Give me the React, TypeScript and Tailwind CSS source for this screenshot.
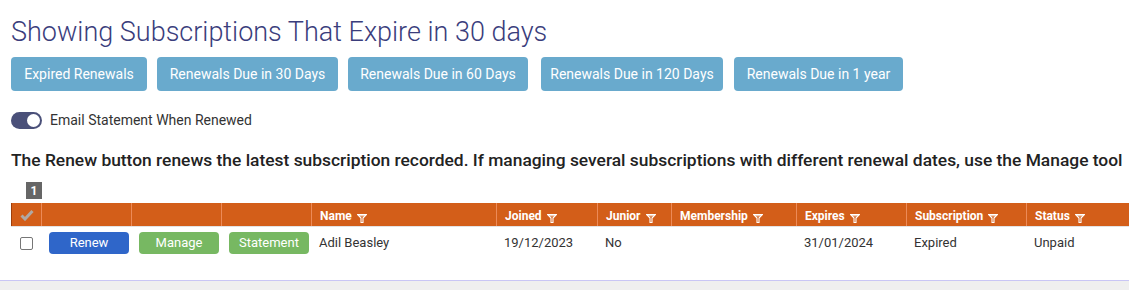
import React from 'react'

const ranges = [
  { label: 'Expired Renewals', w: 'w-[136px]' },
  { label: 'Renewals Due in 30 Days', w: 'w-[181px]' },
  { label: 'Renewals Due in 60 Days', w: 'w-[180px]' },
  { label: 'Renewals Due in 120 Days', w: 'w-[182px]' },
  { label: 'Renewals Due in 1 year', w: 'w-[169px]' },
]

const columns = [
  { label: 'Name', w: 'w-[185px]' },
  { label: 'Joined', w: 'w-[101px]' },
  { label: 'Junior', w: 'w-[74px]' },
  { label: 'Membership', w: 'w-[125px]' },
  { label: 'Expires', w: 'w-[110px]' },
  { label: 'Subscription', w: 'w-[120px]' },
  { label: 'Status', w: 'flex-1' },
]

const row = ['Adil Beasley', '19/12/2023', 'No', '', '31/01/2024', 'Expired', 'Unpaid']

const Funnel = () => (
  <svg width="10" height="9" viewBox="0 0 10 9" className="ml-[5px] mt-[7px] shrink-0">
    <path d="M0.5 0.5 H9.5 L6 4 V8.5 H4 V4 Z" fill="none" stroke="white" strokeWidth="1.1" />
    <path d="M2 1.8 H8" stroke="white" strokeWidth="1" />
  </svg>
)

export default function App() {
  return (
    <div className="w-[1129px] h-[290px] overflow-hidden bg-white font-['Roboto',sans-serif] flex flex-col">
      <div className="px-[11px] pt-[14px]">
        <h1 className="text-[27px] leading-[36px] font-light text-[#3a3d7c]">
          Showing Subscriptions That Expire in 30 days
        </h1>

        <div className="flex mt-[7px]">
          {ranges.map((r, i) => (
            <button
              key={r.label}
              className={`${r.w} h-[34px] rounded-[4px] bg-[#69aacd] text-white text-[14px] ${i === 0 ? '' : i === 3 ? 'ml-[13px]' : i === 4 ? 'ml-[11px]' : 'ml-[10px]'}`}
            >
              {r.label}
            </button>
          ))}
        </div>

        {/* email toggle */}
        <div className="flex items-center mt-[20px] h-[18px]">
          <div className="w-[31px] h-[17px] rounded-full bg-[#4a5079] flex items-center justify-end pr-[2px]">
            <div className="w-[13px] h-[13px] rounded-full bg-white" />
          </div>
          <span className="ml-[8px] text-[14px] text-[#333]">Email Statement When Renewed</span>
        </div>

        <p className="mt-[20px] text-[17.4px] leading-[22px] font-medium text-[#222] whitespace-nowrap">
          The Renew button renews the latest subscription recorded. If managing several subscriptions with different renewal dates, use the Manage tool
        </p>

        <div className="mt-[11px] ml-[15px] w-[16px] h-[17px] bg-[#666] text-white text-[12px] font-bold flex items-center justify-center">
          1
        </div>
      </div>

      <div className="ml-[11px] mt-[4px]">
        <div className="flex h-[23px] bg-[#d35e19] border-l border-[#9e3f0c] text-white text-[12px] font-bold">
          <div className="w-[30px] border-r border-[#ec8a58] flex items-center justify-center">
            <svg width="14" height="12" viewBox="0 0 14 12">
              <path d="M1.5 6.5 L5 10 L12.5 2" fill="none" stroke="#b0a8a4" strokeWidth="3" />
            </svg>
          </div>
          <div className="w-[90px] border-r border-[#ec8a58]" />
          <div className="w-[90px] border-r border-[#ec8a58]" />
          <div className="w-[90px] border-r border-[#ec8a58]" />
          {columns.map((c, i) => (
            <div
              key={c.label}
              className={`${c.w} flex items-start pl-[8px] pt-[4px] ${i < columns.length - 1 ? 'border-r border-[#ec8a58]' : ''}`}
            >
              <span>{c.label}</span>
              <Funnel />
            </div>
          ))}
        </div>

        <div className="flex h-[33px] items-center text-[13px] text-[#333] border-t border-[#e3e3e3]">
          <div className="w-[30px] flex justify-center">
            <input type="checkbox" className="w-[13px] h-[13px] appearance-none border border-[#767676] rounded-[2px] bg-white" />
          </div>
          <div className="w-[90px] pl-[8px]">
            <button className="w-[80px] h-[22px] rounded-[4px] bg-[#2f66c9] text-white text-[13px]">Renew</button>
          </div>
          <div className="w-[90px] pl-[8px]">
            <button className="w-[80px] h-[22px] rounded-[4px] bg-[#77b862] text-white text-[13px]">Manage</button>
          </div>
          <div className="w-[90px] pl-[8px]">
            <button className="w-[80px] h-[22px] rounded-[4px] bg-[#77b862] text-white text-[13px]">Statement</button>
          </div>
          {columns.map((c, i) => (
            <div key={c.label} className={`${c.w} pl-[8px] ${i < columns.length - 1 ? 'border-r border-transparent' : ''}`}>
              {row[i]}
            </div>
          ))}
        </div>
      </div>

      <div className="mt-[21px] border-t border-[#c9c6f5] bg-[#efefef] flex-1" />
    </div>
  )
}
